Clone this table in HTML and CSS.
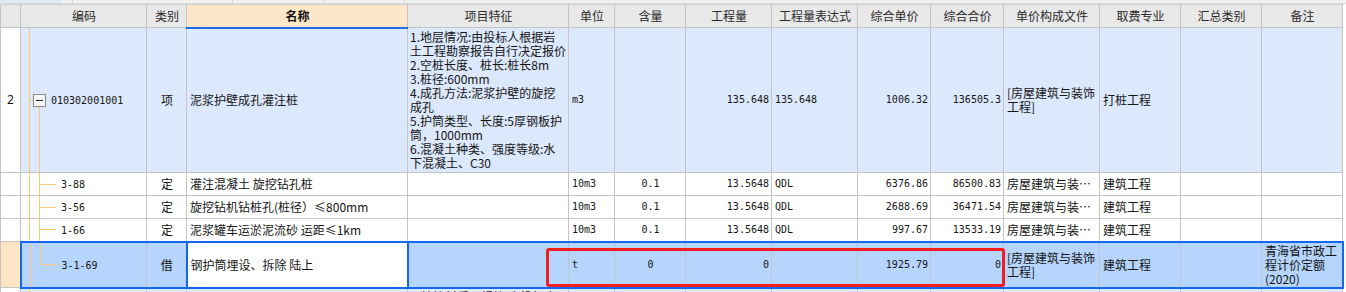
FILE: index.html
```html
<!DOCTYPE html>
<html lang="zh-CN">
<head>
<meta charset="utf-8">
<title>分部分项</title>
<link rel="stylesheet" href="styles.css">
</head>
<body>
<div class="frame">
  <div class="tabstrip">
    <span class="tab tab-active"></span>
    <span class="tab tab-a"></span>
    <span class="tab tab-b"></span>
    <span class="tab tab-c"></span>
    <span class="tab tab-d"></span>
  </div>
  <table class="grid">
    <colgroup>
      <col class="c-no"><col class="c-code"><col class="c-type"><col class="c-name"><col class="c-feat">
      <col class="c-unit"><col class="c-qty"><col class="c-amt"><col class="c-expr"><col class="c-price">
      <col class="c-total"><col class="c-file"><col class="c-spec"><col class="c-sum"><col class="c-note">
    </colgroup>
    <thead>
      <tr class="head">
        <th></th>
        <th>编码</th>
        <th>类别</th>
        <th class="h-name">名称</th>
        <th>项目特征</th>
        <th>单位</th>
        <th>含量</th>
        <th>工程量</th>
        <th>工程量表达式</th>
        <th>综合单价</th>
        <th>综合合价</th>
        <th>单价构成文件</th>
        <th>取费专业</th>
        <th>汇总类别</th>
        <th>备注</th>
      </tr>
    </thead>
    <tbody>
      <tr class="row-item">
        <td class="no">2</td>
        <td class="code code-parent"><span class="toggle"></span><span class="num">010302001001</span></td>
        <td class="center">项</td>
        <td>泥浆护壁成孔灌注桩</td>
        <td class="feat">1.地层情况:由投标人根据岩<br>土工程勘察报告自行决定报价<br>2.空桩长度、桩长:桩长8m<br>3.桩径:600mm<br>4.成孔方法:泥浆护壁的旋挖<br>成孔<br>5.护筒类型、长度:5厚钢板护<br>筒，1000mm<br>6.混凝土种类、强度等级:水<br>下混凝土、C30</td>
        <td class="num">m3</td>
        <td class="num center"></td>
        <td class="num right">135.648</td>
        <td class="num">135.648</td>
        <td class="num right">1006.32</td>
        <td class="num right">136505.3</td>
        <td class="wrap">[房屋建筑与装饰<br>工程]</td>
        <td>打桩工程</td>
        <td></td>
        <td></td>
      </tr>
      <tr class="row-sub">
        <td class="no"></td>
        <td class="code code-child"><span class="num">3-88</span></td>
        <td class="center">定</td>
        <td>灌注混凝土 旋挖钻孔桩</td>
        <td></td>
        <td class="num">10m3</td>
        <td class="num center">0.1</td>
        <td class="num right">13.5648</td>
        <td class="num">QDL</td>
        <td class="num right">6376.86</td>
        <td class="num right">86500.83</td>
        <td>房屋建筑与装…</td>
        <td>建筑工程</td>
        <td></td>
        <td></td>
      </tr>
      <tr class="row-sub">
        <td class="no"></td>
        <td class="code code-child"><span class="num">3-56</span></td>
        <td class="center">定</td>
        <td>旋挖钻机钻桩孔(桩径）≤800mm</td>
        <td></td>
        <td class="num">10m3</td>
        <td class="num center">0.1</td>
        <td class="num right">13.5648</td>
        <td class="num">QDL</td>
        <td class="num right">2688.69</td>
        <td class="num right">36471.54</td>
        <td>房屋建筑与装…</td>
        <td>建筑工程</td>
        <td></td>
        <td></td>
      </tr>
      <tr class="row-sub">
        <td class="no"></td>
        <td class="code code-child"><span class="num">1-66</span></td>
        <td class="center">定</td>
        <td>泥浆罐车运淤泥流砂 运距≤1km</td>
        <td></td>
        <td class="num">10m3</td>
        <td class="num center">0.1</td>
        <td class="num right">13.5648</td>
        <td class="num">QDL</td>
        <td class="num right">997.67</td>
        <td class="num right">13533.19</td>
        <td>房屋建筑与装…</td>
        <td>建筑工程</td>
        <td></td>
        <td></td>
      </tr>
      <tr class="row-sel">
        <td class="no no-sel"></td>
        <td class="code code-last sel-first"><span class="num">3-1-69</span></td>
        <td class="center">借</td>
        <td class="edit">钢护筒埋设、拆除 陆上</td>
        <td></td>
        <td class="num">t</td>
        <td class="num center">0</td>
        <td class="num right">0</td>
        <td class="num"></td>
        <td class="num right">1925.79</td>
        <td class="num right">0</td>
        <td class="wrap">[房屋建筑与装饰<br>工程]</td>
        <td>建筑工程</td>
        <td></td>
        <td class="wrap sel-last">青海省市政工<br>程计价定额<br>(2020)</td>
      </tr>
      <tr class="row-next">
        <td class="no"></td>
        <td class="code code-tail"></td>
        <td></td>
        <td></td>
        <td class="top">1.护筒材质、规格:由投标人</td>
        <td></td>
        <td></td>
        <td></td>
        <td></td>
        <td></td>
        <td></td>
        <td></td>
        <td></td>
        <td></td>
        <td></td>
      </tr>
    </tbody>
  </table>
  <div class="mark"></div>
</div>
</body>
</html>
```
FILE: styles.css
```css
* { box-sizing: border-box; }

body {
  margin: 0;
  background: #ffffff;
  font-family: "Noto Sans CJK SC", "Noto Sans", sans-serif;
  font-size: 12px;
  color: #161616;
}

.frame {
  position: relative;
  width: 1346px;
  height: 292px;
  overflow: hidden;
}

/* thin strip of the tab bar above the grid */
.tabstrip {
  display: flex;
  height: 4px;
  background: #f1f1f1;
  border-bottom: 1px solid #dadada;
}
.tab { height: 3px; border-right: 1px solid #d6d6d6; }
.tab-active { width: 62px; background: #dfe9f6; border-right: none; }
.tab-a { width: 11px; }
.tab-b { width: 160px; }
.tab-c { width: 92px; }
.tab-d { width: 80px; }

.grid {
  border-collapse: collapse;
  table-layout: fixed;
  width: 1342px;
}

.c-no { width: 20px; }
.c-code { width: 126px; }
.c-type { width: 40px; }
.c-name { width: 221px; }
.c-feat { width: 161px; }
.c-unit { width: 46px; }
.c-qty { width: 71px; }
.c-amt { width: 86px; }
.c-expr { width: 86px; }
.c-price { width: 73px; }
.c-total { width: 73px; }
.c-file { width: 96px; }
.c-spec { width: 81px; }
.c-sum { width: 81px; }
.c-note { width: 81px; }

.grid th,
.grid td {
  border: 1px solid #c4c4c4;
  padding: 0 2px 0 3px;
  overflow: hidden;
  white-space: nowrap;
  line-height: 14px;
  text-align: left;
  font-weight: normal;
}

.grid th {
  background: #e8e8e8;
  color: #2a2a2a;
  text-align: center;
  border-top-color: #cfcfcf;
}
.grid th.h-name {
  background: #fee6c9;
  font-weight: bold;
  color: #111;
  border-bottom: 2px solid #1b6fe6;
}

.head { height: 23px; }
.row-item { height: 145px; background: #dce8fb; }
.row-sub { height: 23px; background: #ffffff; }
.row-sel { height: 46px; background: #b5d5fd; }
.row-next { height: 30px; background: #dce8fb; }

.num {
  font-family: "DejaVu Sans Mono", "Liberation Mono", monospace;
  font-size: 10px;
}
.center { text-align: center !important; }
.right { text-align: right !important; }
.top { vertical-align: top; padding-top: 1px !important; }

.grid td.no {
  background: #ffffff;
  text-align: center;
  padding: 0;
  font-family: "Noto Sans", sans-serif;
  font-size: 12px;
}
.grid td.no-sel { background: #fde4c5; }

.grid td.feat { padding-left: 2px; padding-right: 0; }

/* tree connectors drawn as cell backgrounds */
.code-parent {
  padding-left: 12px !important;
  background:
    linear-gradient(#fdc77c, #fdc77c) 8px 0 / 1px 100% no-repeat,
    linear-gradient(#fdc77c, #fdc77c) 18px 79px / 1px 100% no-repeat,
    linear-gradient(#fdc77c, #fdc77c) 8px 72px / 4px 1px no-repeat;
}
.code-child,
.code-last {
  padding-left: 40px !important;
}
.code-child {
  background:
    linear-gradient(#fdc77c, #fdc77c) 8px 0 / 1px 100% no-repeat,
    linear-gradient(#fdc77c, #fdc77c) 18px 0 / 1px 100% no-repeat,
    linear-gradient(#fdc77c, #fdc77c) 19px 50% / 16px 1px no-repeat;
}
.code-last {
  background:
    linear-gradient(#fdc77c, #fdc77c) 8px 0 / 1px 100% no-repeat,
    linear-gradient(#fdc77c, #fdc77c) 18px 0 / 1px 50% no-repeat,
    linear-gradient(#fdc77c, #fdc77c) 19px 50% / 16px 1px no-repeat;
}
.code-tail {
  background: linear-gradient(#fdc77c, #fdc77c) 8px 0 / 1px 100% no-repeat;
}

.toggle {
  display: inline-block;
  width: 13px;
  height: 13px;
  border: 1px solid #8a8a8a;
  background: #f7f7f7 linear-gradient(#222, #222) center / 7px 1px no-repeat;
  vertical-align: -3px;
  margin-right: 5px;
}

/* selected row frame */
.row-sel td:not(.no) {
  border-top: 2px solid #1468f0;
  border-bottom: 2px solid #1468f0;
}
.row-sel td.sel-first { border-left: 2px solid #1468f0; }
.row-sel td.sel-last { border-right: 2px solid #1468f0; }
.row-sel td.edit {
  background: #ffffff;
  border-left: 2px solid #1468f0;
  border-right: 2px solid #1468f0;
}

/* red annotation rectangle */
.mark {
  position: absolute;
  left: 546px;
  top: 248px;
  width: 459px;
  height: 39px;
  border: 3px solid #f31d1d;
  border-radius: 3px;
}
```
